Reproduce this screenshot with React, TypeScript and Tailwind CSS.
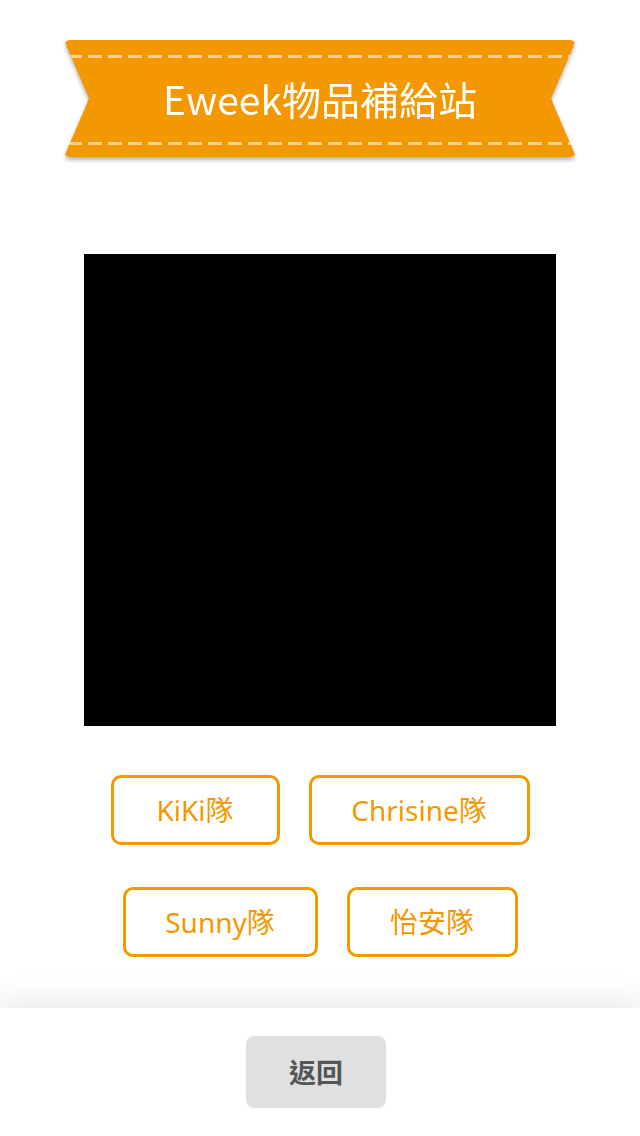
const teams = [
  [
    { name: "KiKi隊", width: "w-[169px]" },
    { name: "Chrisine隊", width: "w-[221px]" },
  ],
  [
    { name: "Sunny隊", width: "w-[195px]" },
    { name: "怡安隊", width: "w-[171px]" },
  ],
];

const dashes =
  "bg-[repeating-linear-gradient(90deg,transparent_0_4px,rgba(255,255,255,0.55)_4px_18px,transparent_18px_20px)]";

export default function App() {
  return (
    <div className="flex h-screen flex-col bg-white font-['Noto_Sans_CJK_TC',sans-serif]">
      <main className="flex-1">
        {/* ribbon title */}
        <div className="mx-auto mt-10 w-[512px] drop-shadow-[0_3px_2px_rgba(0,0,0,0.3)]">
          <div className="relative flex h-[117px] items-center justify-center rounded-[6px] bg-[#f39800] [clip-path:polygon(0_0,100%_0,calc(100%-25px)_50%,100%_100%,0_100%,25px_50%)]">
            <div className={`absolute left-0 right-0 top-[15px] h-[3px] ${dashes}`} />
            <div className={`absolute bottom-[12px] left-0 right-0 h-[3px] ${dashes}`} />
            <h1 className="text-[39px] leading-none text-white">Eweek物品補給站</h1>
          </div>
        </div>

        <div className="mx-auto mt-[97px] h-[472px] w-[472px] bg-black" />

        <div className="mt-[49px] flex flex-col items-center gap-[42px]">
          {teams.map((row, i) => (
            <div key={i} className="flex gap-[29px]">
              {row.map((team) => (
                <button
                  key={team.name}
                  className={`flex h-[70px] items-center justify-center rounded-[10px] border-[3px] border-[#f39800] bg-white font-['Noto_Sans','Noto_Sans_CJK_TC',sans-serif] text-[28px] leading-none text-[#f39800] ${team.width}`}
                >
                  {team.name}
                </button>
              ))}
            </div>
          ))}
        </div>
      </main>

      <footer className="flex h-[128px] shrink-0 items-center justify-center bg-white shadow-[0_-8px_30px_rgba(0,0,0,0.09)]">
        <button className="-ml-2 h-[72px] w-[140px] rounded-[8px] bg-[#dfe0e2] text-[27px] font-bold text-[#555555]">
          返回
        </button>
      </footer>
    </div>
  );
}
